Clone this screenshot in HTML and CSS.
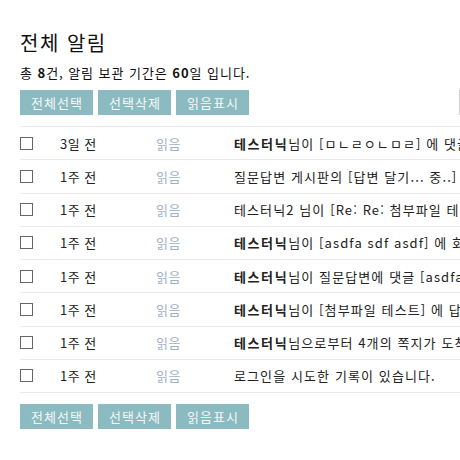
FILE: index.html
```html
<!DOCTYPE html>
<html lang="ko">
<head>
<meta charset="utf-8">
<title>전체 알림</title>
<link rel="stylesheet" href="styles.css">
</head>
<body>
<div class="page">
  <h1 class="title">전체 알림</h1>
  <p class="summary">총 <b>8</b>건, 알림 보관 기간은 <b>60</b>일 입니다.</p>
  <div class="toolbar">
    <button class="btn">전체선택</button>
    <button class="btn">선택삭제</button>
    <button class="btn">읽음표시</button>
    <span class="selectbox"></span>
  </div>
  <div class="list">
    <div class="row"><span class="chk"></span><span class="time">3일 전</span><span class="state">읽음</span><span class="msg"><b>테스터닉</b>님이 [ㅁㄴㄹㅇㄴㅁㄹ] 에 댓글을 남기셨습니다.</span></div>
    <div class="row"><span class="chk"></span><span class="time">1주 전</span><span class="state">읽음</span><span class="msg">질문답변 게시판의 [답변 달기... 중..] 5개의 새 글이 등록되었습니다.</span></div>
    <div class="row"><span class="chk"></span><span class="time">1주 전</span><span class="state">읽음</span><span class="msg">테스터닉2 님이 [Re: Re: 첨부파일 테스트] 에 답글을 남기셨습니다.</span></div>
    <div class="row"><span class="chk"></span><span class="time">1주 전</span><span class="state">읽음</span><span class="msg"><b>테스터닉</b>님이 [asdfa sdf asdf] 에 회원님을 언급하였습니다.</span></div>
    <div class="row"><span class="chk"></span><span class="time">1주 전</span><span class="state">읽음</span><span class="msg"><b>테스터닉</b>님이 질문답변에 댓글 [asdfasdf] 을 남기셨습니다.</span></div>
    <div class="row"><span class="chk"></span><span class="time">1주 전</span><span class="state">읽음</span><span class="msg"><b>테스터닉</b>님이 [첨부파일 테스트] 에 답글을 남기셨습니다.</span></div>
    <div class="row"><span class="chk"></span><span class="time">1주 전</span><span class="state">읽음</span><span class="msg"><b>테스터닉</b>님으로부터 4개의 쪽지가 도착하였습니다.</span></div>
    <div class="row"><span class="chk"></span><span class="time">1주 전</span><span class="state">읽음</span><span class="msg">로그인을 시도한 기록이 있습니다.</span></div>
  </div>
  <div class="toolbar bottom">
    <button class="btn">전체선택</button>
    <button class="btn">선택삭제</button>
    <button class="btn">읽음표시</button>
  </div>
</div>
</body>
</html>
```

FILE: styles.css
```css
html, body {
  margin: 0;
  padding: 0;
  background: #fff;
  overflow: hidden;
}
body {
  width: 460px;
  height: 460px;
  font-family: "Noto Sans CJK KR", "Noto Sans", sans-serif;
  color: #222;
}
.page {
  padding: 29px 0 0 20px;
  width: 900px;
}
.title {
  margin: 0;
  font-size: 20px;
  line-height: 28px;
  font-weight: normal;
  letter-spacing: 1.5px;
  color: #111;
}
.summary {
  margin: 7px 0 0;
  font-size: 13px;
  line-height: 18px;
  letter-spacing: 0.95px;
  color: #111;
}
.summary b {
  font-weight: bold;
}
.toolbar {
  display: flex;
  gap: 5px;
  margin-top: 8px;
  height: 25px;
}
.toolbar.bottom {
  margin-top: 11px;
}
.btn {
  border: 0;
  margin: 0;
  width: 73px;
  height: 25px;
  padding: 0 0 0 1px;
  background: #8bbbc0;
  color: #f4f8f8;
  font-family: "Noto Sans CJK KR", "Noto Sans", sans-serif;
  font-size: 13px;
  line-height: 25px;
  letter-spacing: 1px;
  text-align: center;
}
.selectbox {
  margin-left: 205px;
  width: 120px;
  height: 25px;
  box-sizing: border-box;
  border: 1px solid #d0d0d0;
}
.list {
  margin-top: 11px;
  border-top: 1px solid #ebebeb;
}
.row {
  display: flex;
  align-items: center;
  height: 32.25px;
  border-bottom: 1px solid #ebebeb;
  font-size: 13px;
  white-space: nowrap;
}
.chk {
  box-sizing: border-box;
  width: 13px;
  height: 13px;
  border: 1px solid #666;
  margin-right: 27px;
  flex: none;
}
.time {
  width: 96px;
  flex: none;
  color: #222;
  letter-spacing: 0.5px;
}
.state {
  width: 78px;
  flex: none;
  color: #9bb1c8;
  letter-spacing: 0.5px;
}
.msg {
  color: #222;
  letter-spacing: 1.1px;
}
.msg b {
  font-weight: bold;
  letter-spacing: 1.6px;
}
```
